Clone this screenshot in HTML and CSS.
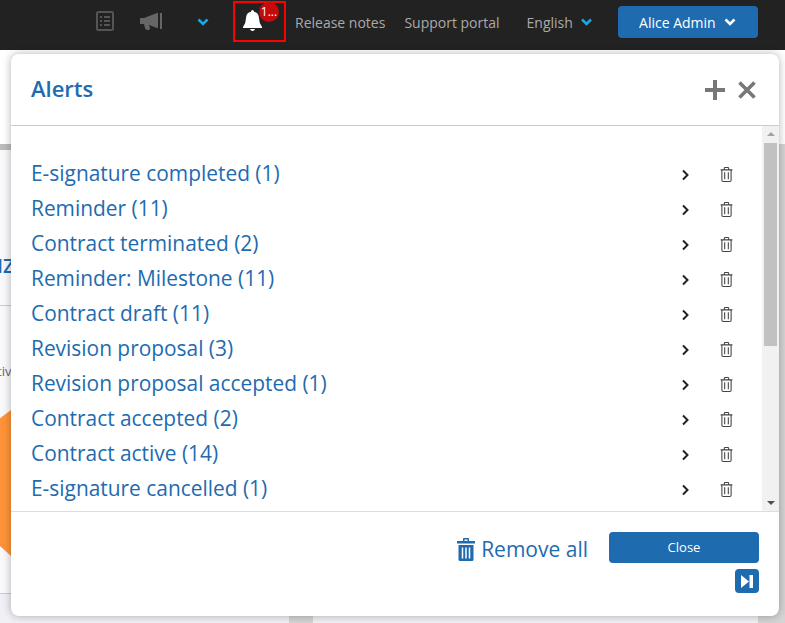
FILE: index.html
```html
<!DOCTYPE html>
<html lang="en">
  <head>
    <meta charset="UTF-8" />
    <title>Alerts</title>
    <link rel="stylesheet" href="styles.css">
  </head>
  <body>
    <svg class="defs" width="0" height="0">
      <symbol id="chev" viewBox="0 0 12 8"><path d="M1.500 1.500 6 6l4.500-4.500" fill="none" stroke="currentColor" stroke-width="2.600"/></symbol>
      <symbol id="right" viewBox="0 0 9 12"><path d="M2 1.500 6.500 6 2 10.500" fill="none" stroke="currentColor" stroke-width="2"/></symbol>
      <symbol id="bin" viewBox="0 0 12 14"><path d="M.5 2.700h11M4 2.500V1.200q0-.7.7-.7h2.600q.7 0 .7.7v1.300M1.700 2.700v9.600q0 1.200 1.200 1.200h6.200q1.200 0 1.200-1.200V2.700M4.300 5v6.500M7.700 5v6.500" fill="none" stroke="currentColor" stroke-width="1"/></symbol>
    </svg>

    <header class="topbar">
      <svg class="ico-list" width="18" height="20" viewBox="0 0 18 20"><rect x="1" y="1" width="16" height="18" rx="1.500" fill="none" stroke="currentColor" stroke-width="2"/><path d="M4 6h2M8 6h6M4 10h2M8 10h6M4 14h2M8 14h6" stroke="currentColor" stroke-width="2"/></svg>
      <svg class="ico-horn" width="22" height="17" viewBox="0 0 22 17"><path d="M0 5h4l13-5h1v15h-1L9 12l1 3q.2 1.800-1.500 2H7q-1.500 0-2-2L4 11H0z" fill="currentColor"/><rect x="20" y="0" width="2" height="16" fill="currentColor"/></svg>
      <svg class="ico-chev" width="12" height="8"><use href="#chev"/></svg>
      <div class="bell-box">
        <svg width="19" height="21" viewBox="0 0 19 21"><path d="M9.500 0q1.500 0 1.500 1.700 4.800 1 5 6.300 0 5 3 9v1H0v-1q3-4 3-9 .2-5.300 5-6.300Q8 0 9.500 0zM7 19h5q-.5 2-2.500 2T7 19z" fill="#fff"/></svg>
        <span class="badge">1...</span>
      </div>
      <a class="nav-link release">Release notes</a>
      <a class="nav-link support">Support portal</a>
      <a class="nav-link lang">English</a>
      <svg class="ico-chev lang-chev" width="13" height="8"><use href="#chev"/></svg>
      <button class="user-btn">Alice Admin <svg width="14" height="8"><use href="#chev"/></svg></button>
    </header>

    <div class="page">
      <section class="panel panel-left">
        <div class="panel-card">
          <div class="panel-bar"></div>
          <h2 class="panel-title">IZ</h2>
          <p class="panel-text">tiv</p>
          <svg class="orange" width="40" height="146" viewBox="0 0 40 146"><path d="M40 0v146L0 110V30z" fill="#ff9238"/></svg>
        </div>
      </section>
      <section class="panel panel-right"></section>
    </div>

    <div class="dialog">
      <div class="dialog-head">
        <h1>Alerts</h1>
        <svg width="20" height="20" viewBox="0 0 20 20"><path d="M10 0v20M0 10h20" stroke="#777" stroke-width="4"/></svg>
        <svg class="head-x" width="18" height="18" viewBox="0 0 18 18"><path d="M1.500 1.500l15 15M16.500 1.500l-15 15" stroke="#777" stroke-width="3.600"/></svg>
      </div>
      <div class="dialog-body">
        <ul class="alerts">
          <li><a>E-signature completed (1)</a><svg class="go" width="9" height="12"><use href="#right"/></svg><svg class="del" width="13" height="15"><use href="#bin"/></svg></li>
          <li><a>Reminder (11)</a><svg class="go" width="9" height="12"><use href="#right"/></svg><svg class="del" width="13" height="15"><use href="#bin"/></svg></li>
          <li><a>Contract terminated (2)</a><svg class="go" width="9" height="12"><use href="#right"/></svg><svg class="del" width="13" height="15"><use href="#bin"/></svg></li>
          <li><a>Reminder: Milestone (11)</a><svg class="go" width="9" height="12"><use href="#right"/></svg><svg class="del" width="13" height="15"><use href="#bin"/></svg></li>
          <li><a>Contract draft (11)</a><svg class="go" width="9" height="12"><use href="#right"/></svg><svg class="del" width="13" height="15"><use href="#bin"/></svg></li>
          <li><a>Revision proposal (3)</a><svg class="go" width="9" height="12"><use href="#right"/></svg><svg class="del" width="13" height="15"><use href="#bin"/></svg></li>
          <li><a>Revision proposal accepted (1)</a><svg class="go" width="9" height="12"><use href="#right"/></svg><svg class="del" width="13" height="15"><use href="#bin"/></svg></li>
          <li><a>Contract accepted (2)</a><svg class="go" width="9" height="12"><use href="#right"/></svg><svg class="del" width="13" height="15"><use href="#bin"/></svg></li>
          <li><a>Contract active (14)</a><svg class="go" width="9" height="12"><use href="#right"/></svg><svg class="del" width="13" height="15"><use href="#bin"/></svg></li>
          <li><a>E-signature cancelled (1)</a><svg class="go" width="9" height="12"><use href="#right"/></svg><svg class="del" width="13" height="15"><use href="#bin"/></svg></li>
        </ul>
        <div class="scrollbar">
          <span class="arrow-up"></span>
          <span class="thumb"></span>
          <span class="arrow-down"></span>
        </div>
      </div>
      <div class="dialog-foot">
        <a class="remove-all">
          <svg width="18" height="23" viewBox="0 0 18 23"><path d="M0 3h18v2.500H0zM6 3V.8Q6 0 6.800 0h4.400q.8 0 .8.8V3h-1.500V1.500h-3V3zM1.500 7h15v14.500q0 1.500-1.500 1.500H3q-1.500 0-1.500-1.500z" fill="currentColor"/><path d="M5.500 9.500v11M9 9.500v11M12.500 9.500v11" stroke="#fff" stroke-width="1.500"/></svg>
          Remove all
        </a>
        <div class="foot-btns">
          <button class="close-btn">Close</button>
          <button class="skip-btn"><svg width="12" height="13" viewBox="0 0 12 13"><path d="M0 0l8 6.500L0 13zM8.500 0H12v13H8.500z" fill="#fff"/></svg></button>
        </div>
      </div>
    </div>
  </body>
</html>
```

FILE: styles.css
```css
* {
  box-sizing: border-box;
}
html,
body {
  height: 100%;
}
body {
  margin: 0;
  position: relative;
  overflow: hidden;
  font-family: "Open Sans", "Liberation Sans", sans-serif;
  background-color: #fff;
}
.defs {
  position: absolute;
}

/* top bar */
.topbar {
  height: 50px;
  background-color: #222;
  display: flex;
  align-items: center;
  padding: 0 0 6px 96px;
  color: #aaa;
  font-size: 14px;
}
.ico-list {
  color: #555;
  margin-top: -3px;
}
.ico-horn {
  color: #666;
  margin-left: 26px;
  margin-top: -2px;
}
.ico-chev {
  color: #1ba6e4;
  margin-left: 35px;
  margin-top: -1px;
}
.bell-box {
  width: 53px;
  height: 41px;
  margin-left: 24px;
  margin-top: -1px;
  border: 2px solid #f00;
  position: relative;
  padding: 7px 0 0 8px;
}
.bell-box svg {
  display: block;
}
.badge {
  position: absolute;
  left: 24px;
  top: -1px;
  width: 20px;
  height: 20px;
  border-radius: 50%;
  background-color: #c40a0a;
  color: #fff;
  font-size: 12px;
  line-height: 20px;
  text-align: center;
}
.nav-link {
  white-space: nowrap;
}
.release {
  margin-left: 9px;
}
.support {
  margin-left: 19px;
}
.lang {
  margin-left: 27px;
}
.lang-chev {
  margin-left: 7px;
}
.user-btn {
  width: 140px;
  height: 32px;
  margin-left: 25px;
  border: none;
  border-radius: 4px;
  background-color: #1e6bb0;
  color: #fff;
  font-family: inherit;
  font-size: 14px;
  display: flex;
  align-items: center;
  justify-content: center;
  gap: 7px;
}

/* page behind the dialog */
.page {
  height: 573px;
  display: flex;
  gap: 24px;
  padding: 94px 27px 0 0;
  background: linear-gradient(#fff 94px, #d4d4d4 94px);
}
.panel {
  background-color: #f0f0f6;
}
.panel-left {
  width: 289px;
  overflow: hidden;
}
.panel-right {
  flex: 1;
}
.panel-card {
  height: 450px;
  background-color: #f9f9fc;
  border-bottom: 1px solid #ccc;
}
.panel-bar {
  height: 6px;
  background-color: #bbb;
}
.panel-title {
  height: 156px;
  margin: 0 0 0 -3px;
  padding-top: 104px;
  color: #1e6bb0;
  font-size: 20px;
  font-weight: 600;
  line-height: 24px;
  border-bottom: 1px solid #ccc;
}
.panel-text {
  margin: 56px 0 0 -3px;
  color: #666;
  font-size: 13px;
  line-height: 18px;
}
.orange {
  display: block;
  margin: 30px 0 0 -29px;
}

/* alerts dialog */
.dialog {
  position: absolute;
  left: 11px;
  top: 54px;
  width: 768px;
  height: 562px;
  background-color: #fff;
  border-radius: 8px;
  box-shadow: 0 0 8px rgba(0, 0, 0, 0.3);
  display: flex;
  flex-direction: column;
}
.dialog-head {
  height: 72px;
  flex: none;
  display: flex;
  align-items: center;
  padding: 0 23px 0 20px;
  border-bottom: 1px solid #ccc;
}
.dialog-head h1 {
  margin: 0 auto 4px 0;
  color: #1e6bb0;
  font-size: 22px;
  font-weight: 600;
}
.head-x {
  margin-left: 13px;
}
.dialog-body {
  height: 386px;
  flex: none;
  display: flex;
  border-bottom: 1px solid #ddd;
  overflow: hidden;
}
.alerts {
  flex: 1;
  list-style: none;
  margin: 0;
  padding: 30px 29px 0 20px;
}
.alerts li {
  height: 35px;
  display: flex;
  align-items: center;
}
.alerts a {
  flex: 1;
  color: #1e6bb0;
  font-size: 20.9px;
  margin-top: -1px;
}
.go {
  color: #222;
  margin-top: 2px;
}
.del {
  color: #444;
  margin-left: 30px;
  margin-top: 2px;
}

.scrollbar {
  width: 17px;
  flex: none;
  background-color: #f1f1f1;
  display: flex;
  flex-direction: column;
  align-items: center;
  padding-top: 6px;
  padding-bottom: 6px;
}
.arrow-up {
  width: 0;
  height: 0;
  border: 4px solid transparent;
  border-top: none;
  border-bottom: 4px solid #a3a3a3;
}
.thumb {
  width: 13px;
  height: 203px;
  margin-top: 7px;
  background-color: #c1c1c1;
}
.arrow-down {
  width: 0;
  height: 0;
  margin-top: auto;
  border: 4px solid transparent;
  border-bottom: none;
  border-top: 4px solid #505050;
}
.dialog-foot {
  flex: 1;
  display: flex;
  justify-content: flex-end;
  padding: 20px 20px 0 0;
}
.remove-all {
  display: flex;
  align-items: center;
  gap: 6px;
  height: 34px;
  color: #1e6bb0;
  font-size: 21px;
  margin-right: 21px;
}
.foot-btns {
  width: 150px;
  display: flex;
  flex-direction: column;
  align-items: flex-end;
  gap: 6px;
}
.close-btn {
  width: 150px;
  height: 31px;
  padding: 0 0 1px;
  border: none;
  border-radius: 4px;
  background-color: #1e6bb0;
  color: #fff;
  font-family: inherit;
  font-size: 13px;
}
.skip-btn {
  width: 24px;
  height: 24px;
  padding: 0;
  border: none;
  border-radius: 4px;
  background-color: #1e6bb0;
  display: flex;
  align-items: center;
  justify-content: center;
}
```
